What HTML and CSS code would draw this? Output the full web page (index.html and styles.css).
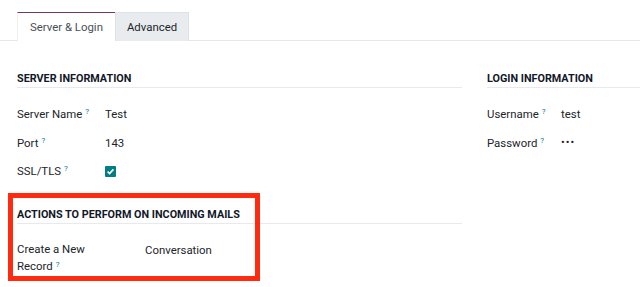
FILE: index.html
```html
<!DOCTYPE html>
<html>
<head>
<meta charset="utf-8">
<link rel="stylesheet" href="styles.css">
</head>
<body>
<div class="tabs">
  <div class="tab active">Server &amp; Login</div>
  <div class="tab">Advanced</div>
</div>
<div class="content">
  <div class="groups">
    <div class="group left">
      <div class="heading">Server Information</div>
      <div class="rows">
        <div class="row"><div class="label">Server Name<sup class="help">?</sup></div><div class="value">Test</div></div>
        <div class="row"><div class="label">Port<sup class="help">?</sup></div><div class="value">143</div></div>
        <div class="row"><div class="label">SSL/TLS<sup class="help">?</sup></div><div class="value"><span class="check"><svg width="11" height="11" viewBox="0 0 11 11"><path d="M2.6 5.6 L4.6 7.5 L8.4 3.4" fill="none" stroke="#fff" stroke-width="1.7"/></svg></span></div></div>
      </div>
    </div>
    <div class="group right">
      <div class="heading">Login Information</div>
      <div class="rows">
        <div class="row"><div class="label">Username<sup class="help">?</sup></div><div class="value">test</div></div>
        <div class="row"><div class="label">Password<sup class="help">?</sup></div><div class="value dots">•••</div></div>
      </div>
    </div>
  </div>
  <div class="actions">
    <div class="heading">Actions to Perform on Incoming Mails</div>
    <div class="arow">
      <div class="alabel">Create a New Record<sup class="help">?</sup></div>
      <div class="avalue">Conversation</div>
    </div>
  </div>
</div>
</body>
</html>
```
FILE: styles.css
```css
html, body {
  margin: 0;
  padding: 0;
  background: #fff;
}
body {
  font-family: Roboto, "Liberation Sans", sans-serif;
  font-size: 11.4px;
  color: #343a40;
  width: 640px;
  height: 287px;
  overflow: hidden;
}
.tabs {
  margin-top: 12px;
  padding-left: 17px;
  display: flex;
  height: 28px;
  border-bottom: 1px solid #e6e7ea;
}
.tab {
  box-sizing: border-box;
  height: 29px;
  line-height: 28px;
  padding: 0 11px;
  background: #e9ecef;
  border: 1px solid #dee2e6;
  border-bottom: none;
  color: #212529;
  white-space: nowrap;
  font-size: 11.4px;
}
.tab.active {
  background: #fff;
  border-top: 1px solid #71385f;
  border-left: 1px solid #eef0f2;
  border-right: none;
  padding: 0 12px 0 12px;
  color: #495057;
}
.content {
  padding-left: 17px;
}
.groups {
  display: flex;
  gap: 25px;
  margin-top: 30px;
}
.group.left {
  width: 445px;
}
.group.right {
  flex: 1;
}
.heading {
  font-weight: 700;
  font-size: 10.8px;
  text-transform: uppercase;
  line-height: 16px;
  color: #111827;
  border-bottom: 1px solid #e7e9ed;
  white-space: nowrap;
}
.rows {
  margin-top: 12px;
}
.row {
  display: flex;
  height: 28.5px;
  align-items: center;
}
.left .label {
  width: 88px;
}
.right .label {
  width: 74px;
}
.label {
  color: #212529;
  white-space: nowrap;
}
.help {
  color: #017e84;
  font-size: 8px;
  margin-left: 3px;
  vertical-align: 4px;
  line-height: 0;
}
.value {
  color: #212529;
}
.dots {
  letter-spacing: 1px;
  font-size: 11px;
}
.check {
  display: block;
  width: 11px;
  height: 11px;
  background: #017e84;
  border-radius: 1px;
  margin-top: 1px;
}
.check svg {
  display: block;
}
.actions {
  position: relative;
  width: 445px;
  margin-top: 21px;
}
.actions::before {
  content: "";
  position: absolute;
  left: -9px;
  top: -14px;
  width: 252px;
  height: 88px;
  box-sizing: border-box;
  border: 5px solid #ff2a10;
  pointer-events: none;
}
.arow {
  display: flex;
  margin-top: 17px;
}
.alabel {
  width: 80px;
  margin-right: 48px;
  line-height: 17px;
  color: #212529;
}
.alabel .help {
  vertical-align: 3px;
}
.avalue {
  line-height: 18px;
  color: #212529;
}
```
